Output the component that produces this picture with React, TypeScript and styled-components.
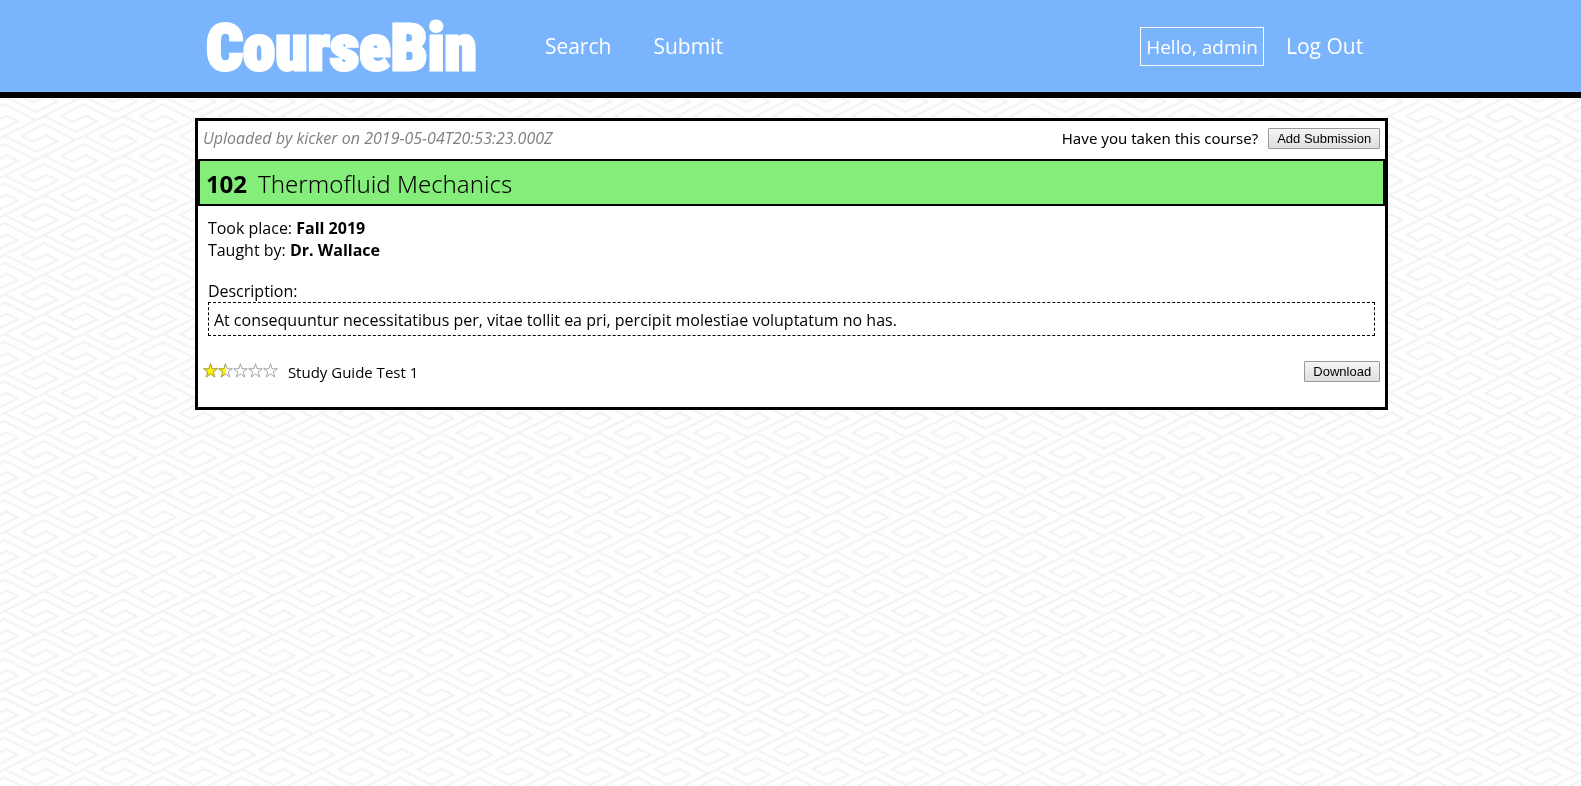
import React from "react";
import styled, { createGlobalStyle, css } from "styled-components";

const GlobalStyle = createGlobalStyle`
  *, *::before, *::after { box-sizing: border-box; }
  body {
    margin: 0;
    background: #fff;
    color: #000;
    font: 16px/22px "Open Sans", "Noto Sans", sans-serif;
  }
  strong { font-weight: 700; }
`;

const Backdrop = styled.svg`
  position: fixed;
  inset: 0;
  width: 100%;
  height: 100%;
  z-index: -1;
`;

const column = css`
  width: calc(75% + 9px);
  margin: 0 auto;
`;

const Header = styled.header`
  padding-left: 2px;
  background: #79b4fc;
  border-bottom: 6px solid #000;
`;

const HeaderInner = styled.div`
  ${column}
  display: flex;
  align-items: center;
  height: 92px;
  padding: 0 25px 0 11px;
`;

const Logo = styled.a`
  min-width: 268px;
  margin-right: 68px;
  padding-top: 4px;
  color: #fff;
  font: 900 65px/88px "Roboto Condensed", Impact, "Liberation Sans", sans-serif;
  -webkit-text-stroke: 3px #fff;
  text-decoration: none;
`;

const Nav = styled.nav`
  display: flex;
  gap: 42px;
`;

const Account = styled.div`
  display: flex;
  align-items: center;
  gap: 22px;
  margin-left: auto;
`;

const HeaderLink = styled.a`
  color: #fff;
  font-size: 21px;
  line-height: 30px;
  text-decoration: none;
`;

const Greeting = styled.span`
  padding: 6px 5px 4px;
  border: 1px solid #fff;
  color: #fff;
  font-size: 19px;
  line-height: 27px;
`;

const Main = styled.main`
  padding: 20px 0 20px 2px;
`;

const Card = styled.article`
  ${column}
  background: #fff;
  border: 3px solid #000;
`;

const CardTop = styled.div`
  display: flex;
  align-items: center;
  gap: 10px;
  padding: 6px 5px 10px;
`;

const Uploaded = styled.em`
  margin-right: auto;
  color: #808080;
`;

const Question = styled.span`
  font: 15px/22px "Noto Sans", sans-serif;
`;

const Button = styled.button`
  height: 21px;
  padding: 0 8px;
  border: 1px solid #999;
  border-radius: 1px;
  background: linear-gradient(#f6f6f6, #dedede);
  color: #000;
  font: 13px/19px "Liberation Sans", Arial, sans-serif;
`;

const CourseTitle = styled.h1`
  display: flex;
  gap: 11px;
  margin: 0;
  padding: 6px 6px 4px;
  border: 2px solid #000;
  background: #85ed79;
  font: 300 24px/33px "Noto Sans", sans-serif;
`;

const Details = styled.section`
  padding: 11px 10px 0;
`;

const Line = styled.p`
  margin: 0;
`;

const DescriptionLabel = styled.h2`
  margin: 19px 0 0;
  font-size: 16px;
  line-height: 22px;
  font-weight: 400;
`;

const Description = styled.p`
  margin: 0;
  padding: 6px 5px 4px;
  border: 1px dashed #000;
`;

const FileRow = styled.div`
  display: flex;
  align-items: flex-start;
  gap: 10px;
  padding: 25px 5px 24px;
`;

const FileName = styled.span`
  margin-right: auto;
  font-size: 15px;
`;

const Stars = styled.svg`
  flex: none;
  display: block;
`;

const STAR = "M7.5.8 9.1 5.8H14.3L10.2 8.9 11.8 14 7.5 10.9 3.2 14 4.8 8.9.7 5.8H5.9Z";

function Rating({ value }: { value: number }) {
  return (
    <Stars width="75" height="20" viewBox="0 -2 75 20" role="img" aria-label={`${value} of 5 stars`}>
      <defs>
        <clipPath id="rated">
          <rect width={value * 15} height="16" />
        </clipPath>
      </defs>
      {[0, 1, 2, 3, 4].map((n) => (
        <path key={n} d={STAR} transform={`translate(${n * 15} 0)`} fill="#fff" stroke="#999" strokeWidth="0.9" />
      ))}
      <g clipPath="url(#rated)">
        {[0, 1, 2, 3, 4].map((n) => (
          <path key={n} d={STAR} transform={`translate(${n * 15} 0)`} fill="#fff200" stroke="#a8a23a" strokeWidth="0.9" />
        ))}
      </g>
    </Stars>
  );
}

const TILE_W = 79.12;
const TILE_H = 39.59;
const FRET =
  "M0 0 31.3 15.7 52.7 5.3 41.5-.6 28.7 6 17 0 39.3-11.7 70.5 4.3M-2 1 41.6-20.8";

function FretPattern() {
  const spots: [number, number][] = [];
  for (let x = -2; x <= 2; x++) {
    for (let y = -2; y <= 2; y++) {
      spots.push([x * TILE_W, y * TILE_H], [(x + 0.5) * TILE_W, (y + 0.5) * TILE_H]);
    }
  }
  return (
    <Backdrop aria-hidden="true">
      <defs>
        <pattern id="fret" x="4.7" y="17.1" width={TILE_W} height={TILE_H} patternUnits="userSpaceOnUse">
          {spots.map(([x, y]) => (
            <path key={`${x},${y}`} d={FRET} transform={`translate(${x} ${y})`} fill="none" stroke="#f3f3f3" strokeWidth="2.2" />
          ))}
        </pattern>
      </defs>
      <rect width="100%" height="100%" fill="url(#fret)" />
    </Backdrop>
  );
}

export default function App() {
  return (
    <>
      <GlobalStyle />
      <FretPattern />
      <Header>
        <HeaderInner>
          <Logo href="#">CourseBin</Logo>
          <Nav>
            <HeaderLink href="#search">Search</HeaderLink>
            <HeaderLink href="#submit">Submit</HeaderLink>
          </Nav>
          <Account>
            <Greeting>Hello, admin</Greeting>
            <HeaderLink href="#logout">Log Out</HeaderLink>
          </Account>
        </HeaderInner>
      </Header>
      <Main>
        <Card>
          <CardTop>
            <Uploaded>Uploaded by kicker on 2019-05-04T20:53:23.000Z</Uploaded>
            <Question>Have you taken this course?</Question>
            <Button type="button">Add Submission</Button>
          </CardTop>
          <CourseTitle>
            <strong>102</strong>
            <span>Thermofluid Mechanics</span>
          </CourseTitle>
          <Details>
            <Line>
              Took place: <strong>Fall 2019</strong>
            </Line>
            <Line>
              Taught by: <strong>Dr. Wallace</strong>
            </Line>
            <DescriptionLabel>Description:</DescriptionLabel>
            <Description>
              At consequuntur necessitatibus per, vitae tollit ea pri, percipit molestiae voluptatum no has.
            </Description>
          </Details>
          <FileRow>
            <Rating value={1.5} />
            <FileName>Study Guide Test 1</FileName>
            <Button type="button">Download</Button>
          </FileRow>
        </Card>
      </Main>
    </>
  );
}
